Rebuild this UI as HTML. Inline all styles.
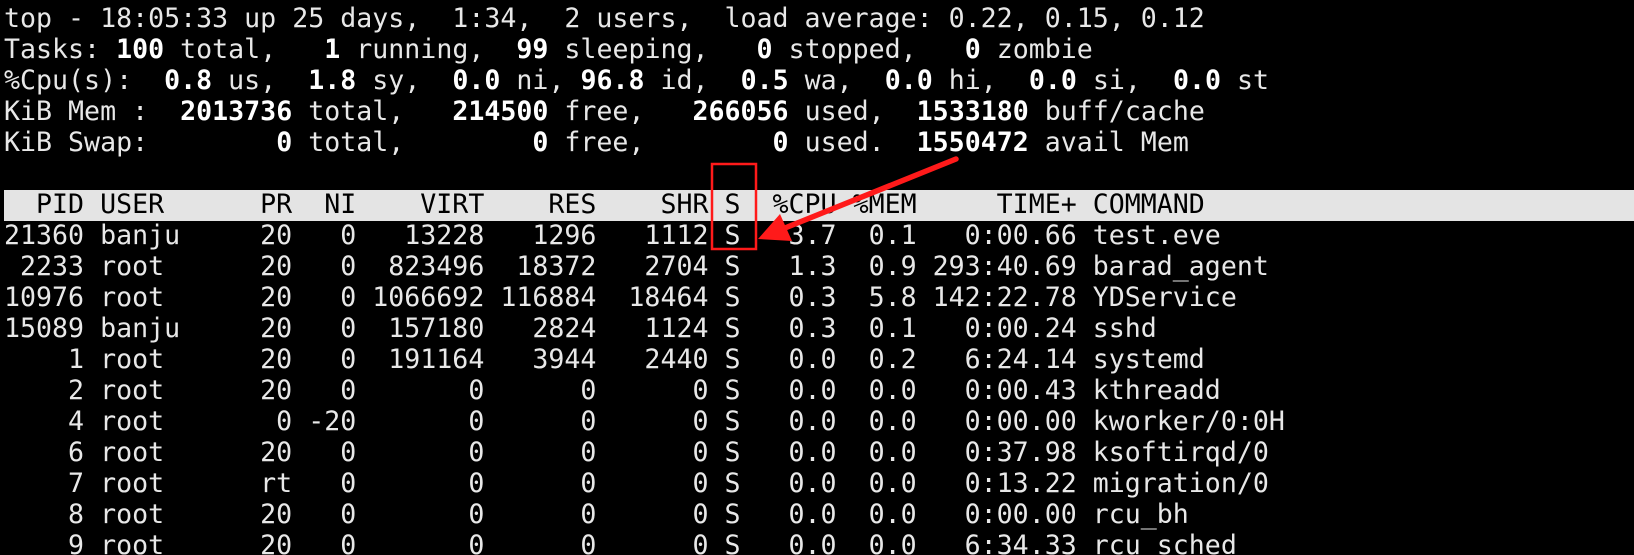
<!DOCTYPE html>
<html><head><meta charset="utf-8"><style>
html,body{margin:0;padding:0;background:#000;width:1634px;height:555px;overflow:hidden;position:relative}
pre{margin:0;position:absolute;left:4px;top:3px;font-family:"DejaVu Sans Mono","Liberation Mono",monospace;font-size:26.6px;line-height:31px;color:#e8e8e8}
b{color:#fff;font-weight:bold}
.hdr{position:absolute;left:4px;top:190px;width:1630px;height:31px;background:#e4e4e4}
.h{color:#000}
</style></head><body>
<div class="hdr"></div>
<pre>top - 18:05:33 up 25 days,  1:34,  2 users,  load average: 0.22, 0.15, 0.12
Tasks: <b>100</b> total,   <b>1</b> running,  <b>99</b> sleeping,   <b>0</b> stopped,   <b>0</b> zombie
%Cpu(s):  <b>0.8</b> us,  <b>1.8</b> sy,  <b>0.0</b> ni, <b>96.8</b> id,  <b>0.5</b> wa,  <b>0.0</b> hi,  <b>0.0</b> si,  <b>0.0</b> st
KiB Mem :  <b>2013736</b> total,   <b>214500</b> free,   <b>266056</b> used,  <b>1533180</b> buff/cache
KiB Swap:        <b>0</b> total,        <b>0</b> free,        <b>0</b> used.  <b>1550472</b> avail Mem

<span class="h">  PID USER      PR  NI    VIRT    RES    SHR S  %CPU %MEM     TIME+ COMMAND</span>
21360 banju     20   0   13228   1296   1112 S   3.7  0.1   0:00.66 test.eve
 2233 root      20   0  823496  18372   2704 S   1.3  0.9 293:40.69 barad_agent
10976 root      20   0 1066692 116884  18464 S   0.3  5.8 142:22.78 YDService
15089 banju     20   0  157180   2824   1124 S   0.3  0.1   0:00.24 sshd
    1 root      20   0  191164   3944   2440 S   0.0  0.2   6:24.14 systemd
    2 root      20   0       0      0      0 S   0.0  0.0   0:00.43 kthreadd
    4 root       0 -20       0      0      0 S   0.0  0.0   0:00.00 kworker/0:0H
    6 root      20   0       0      0      0 S   0.0  0.0   0:37.98 ksoftirqd/0
    7 root      rt   0       0      0      0 S   0.0  0.0   0:13.22 migration/0
    8 root      20   0       0      0      0 S   0.0  0.0   0:00.00 rcu_bh
    9 root      20   0       0      0      0 S   0.0  0.0   6:34.33 rcu_sched</pre>
<svg width="1634" height="555" style="position:absolute;left:0;top:0">
<rect x="712" y="164" width="44" height="85" fill="none" stroke="#ff1a1a" stroke-width="2.5"/>
<line x1="956" y1="159" x2="785" y2="228" stroke="#ff1a1a" stroke-width="5.5" stroke-linecap="round"/>
<polygon points="758,239 780,214 792,241" fill="#ff1a1a"/>
</svg>
</body></html>
